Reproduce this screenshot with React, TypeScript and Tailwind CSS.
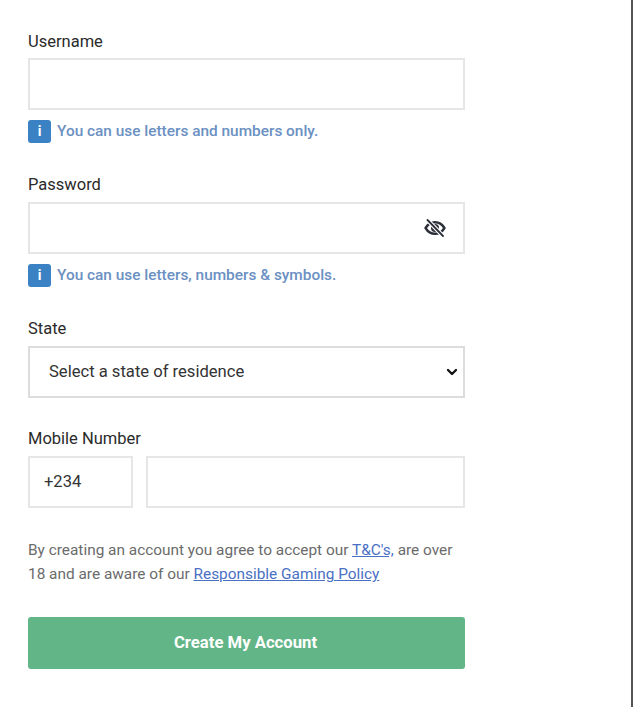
import { ChevronDown } from 'lucide-react';

function Hint({ text }: { text: string }) {
  return (
    <div className="flex items-center h-[24px] mt-[9px]">
      <span className="w-[23px] h-[23px] rounded-[3px] bg-[#3b82c4] text-white flex items-center justify-center text-[14px] font-bold">i</span>
      <span className="ml-[6px] pt-[1px] text-[15.4px] font-medium text-[#6b90c2]">{text}</span>
    </div>
  );
}

function EyeSlash() {
  return (
    <svg width="22" height="18" viewBox="0 0 22 18" fill="none">
      <path d="M1.5 9C4 5 7 3.2 11 3.2S18 5 20.5 9C18 13 15 14.8 11 14.8S4 13 1.5 9Z" stroke="#2b3038" strokeWidth="2.4" strokeLinejoin="round" />
      <circle cx="11" cy="9" r="4" fill="#2b3038" />
      <path d="M4 1.5 18.5 16.5" stroke="#ffffff" strokeWidth="4" />
      <path d="M3.5 1 19 17" stroke="#2b3038" strokeWidth="1.8" strokeLinecap="round" />
    </svg>
  );
}

export default function App() {
  return (
    <div className="relative h-[707px] w-[633px] bg-white px-[28px] pt-[32px] font-['Roboto',sans-serif] overflow-hidden">
      <div className="w-[437px]">
        <label className="block text-[16.5px] leading-[20px] text-[#2a2a2a]">Username</label>
        <input className="mt-[6px] block w-full h-[52px] border-2 border-[#e6e6e6] bg-white" />
        <Hint text="You can use letters and numbers only." />

        <label className="block mt-[32px] text-[16.5px] leading-[20px] text-[#2a2a2a]">Password</label>
        <div className="mt-[7px] flex items-center justify-end h-[52px] border-2 border-[#e6e6e6] pr-[17px]">
          <EyeSlash />
        </div>
        <Hint text="You can use letters, numbers & symbols." />

        <label className="block mt-[32px] text-[16.5px] leading-[20px] text-[#2a2a2a]">State</label>
        <div className="mt-[7px] flex items-center justify-between h-[52px] border-2 border-[#dcdcdf] pl-[19px] pr-[3px]">
          <span className="pt-[1px] text-[16.6px] text-[#333333]">Select a state of residence</span>
          <ChevronDown size={16} strokeWidth={3.5} className="text-[#111111]" />
        </div>

        <label className="block mt-[31px] text-[16.5px] leading-[20px] text-[#2a2a2a]">Mobile Number</label>
        <div className="mt-[7px] flex gap-[13px]">
          <div className="w-[105px] h-[52px] border-2 border-[#e6e6e6] flex items-center pl-[14px] pt-[1px] text-[16.5px] text-[#333333]">+234</div>
          <input className="flex-1 min-w-0 h-[52px] border-2 border-[#e6e6e6] bg-white" />
        </div>

        <p className="mt-[30px] text-[15.4px] leading-[24px] text-[#6b6b6b]">
          By creating an account you agree to accept our <a className="text-[#4a70c4] underline">T&amp;C's,</a> are over 18 and are aware of our <a className="text-[#4a70c4] underline">Responsible Gaming Policy</a>
        </p>

        <button className="mt-[31px] w-full h-[52px] pr-[2px] rounded-[3px] bg-[#62b587] text-white text-[16.7px] font-bold">Create My Account</button>
      </div>
      <div className="absolute right-0 top-0 h-full w-[2px] bg-[#555555]" />
    </div>
  );
}
